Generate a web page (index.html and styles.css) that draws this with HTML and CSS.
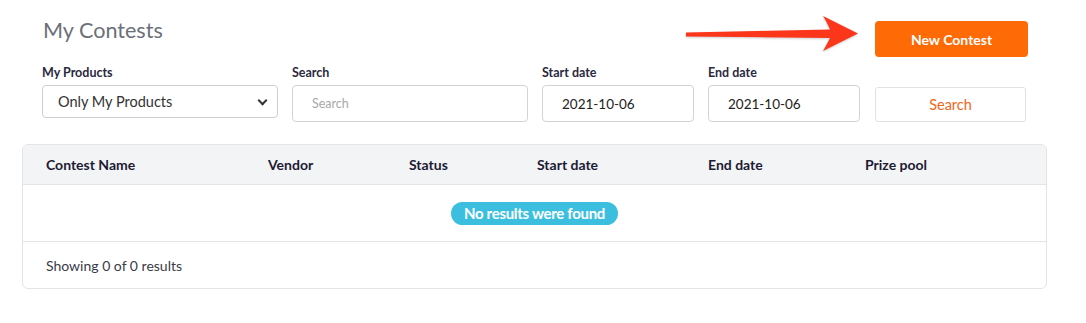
FILE: index.html
```html
<!DOCTYPE html>
<html lang="en">
<head>
  <meta charset="UTF-8">
  <meta name="viewport" content="width=device-width, initial-scale=1.0">
  <title>My Contests</title>
  <link rel="stylesheet" href="styles.css">
</head>
<body>
  <div class="page">
    <div class="top">
      <div class="title-row">
        <h1>My Contests</h1>
        <button type="button" class="btn-new">New Contest</button>
      </div>
      <form class="filters">
        <div class="field">
          <label for="products">My Products</label>
          <div class="select-wrap">
            <select id="products" class="select">
              <option>Only My Products</option>
              <option>All Products</option>
            </select>
          </div>
        </div>
        <div class="field">
          <label for="q">Search</label>
          <input id="q" type="text" class="input input-search" placeholder="Search">
        </div>
        <div class="field">
          <label for="start">Start date</label>
          <input id="start" type="text" class="input" value="2021-10-06">
        </div>
        <div class="field">
          <label for="end">End date</label>
          <input id="end" type="text" class="input" value="2021-10-06">
        </div>
        <div class="field field-btn">
          <button type="button" class="btn-search">Search</button>
        </div>
      </form>
    </div>

    <div class="card">
      <div class="row thead">
        <span>Contest Name</span>
        <span>Vendor</span>
        <span>Status</span>
        <span>Start date</span>
        <span>End date</span>
        <span>Prize pool</span>
      </div>
      <div class="tbody">
        <span class="badge">No results were found</span>
      </div>
      <div class="tfoot">Showing 0 of 0 results</div>
    </div>
  </div>

  <!-- annotation arrow pointing at the New Contest button -->
  <svg class="arrow" width="190" height="50" viewBox="0 0 190 50">
    <path d="M6 22.6 L150 19.5 Q147 12 143 6 L178 23.5 L143 41 Q147 34 150 28 L6 26.4 Z"/>
  </svg>
</body>
</html>
```

FILE: styles.css
```css
body { margin: 0; background: #fff; font-family: Lato, "Open Sans", Arial, sans-serif; color: #333; position: relative; }
.page { width: 1025px; margin-left: 22px; padding-top: 17px; }
.top { padding: 0 19px 0 20px; }

.title-row { display: flex; justify-content: space-between; align-items: flex-start; }
h1 { margin: 0 0 0 1px; font-size: 21.6px; font-weight: 400; line-height: 26px; color: #6b7079; }
.btn-new { width: 153px; height: 36px; margin-top: 4px; border: 0; border-radius: 4px; background: #fd6a06; color: #fff; font-family: inherit; font-size: 14px; font-weight: 700; cursor: pointer; }

.filters { display: grid; grid-template-columns: 236px 236px 152px 152px 1fr; column-gap: 14px; margin-top: 8px; }
.field { display: flex; flex-direction: column; }
.field label { display: block; font-size: 12.5px; font-weight: 700; line-height: 15px; color: #2a2940; margin-bottom: 5px; }
.field-btn { justify-content: flex-end; }

.select-wrap { position: relative; }
.select-wrap::after { content: ""; position: absolute; right: 12px; top: 12px; width: 5px; height: 5px; border-right: 2px solid #333; border-bottom: 2px solid #333; transform: rotate(45deg); pointer-events: none; }
.select { appearance: none; -webkit-appearance: none; width: 100%; height: 33px; padding: 0 30px 0 15px; border: 1px solid #cfcfcf; border-radius: 4px; background: #fff; font-family: inherit; font-size: 14.5px; color: #333; }

.input { box-sizing: border-box; width: 100%; height: 37px; padding: 0 10px 0 19px; border: 1px solid #d3d3d3; border-radius: 4px; background: #fff; font-family: inherit; font-size: 13.5px; color: #222; }
.input-search { font-size: 12.5px; }
.input::placeholder { color: #a8a8a8; }

.btn-search { width: 151px; height: 35px; margin-left: 1px; border: 1px solid #e2e2e2; border-radius: 3px; background: #fff; color: #f2661c; font-family: inherit; font-size: 14.5px; cursor: pointer; }

.card { margin-top: 22px; border: 1px solid #e4e4e4; border-radius: 6px; overflow: hidden; }
.row { display: grid; grid-template-columns: 222px 141px 128px 171px 157px 1fr; padding-left: 23px; }
.thead { height: 39px; align-items: center; background: #f3f4f6; border-bottom: 1px solid #e4e4e4; font-size: 14px; font-weight: 700; color: #1c1b33; }
.tbody { height: 56px; display: flex; align-items: center; justify-content: center; border-bottom: 1px solid #e4e4e4; }
.badge { display: inline-block; height: 23px; line-height: 23px; padding: 0 13px; border-radius: 12px; background: #3cbfdf; color: #fff; font-size: 15px; font-weight: 700; letter-spacing: -0.3px; }
.tfoot { height: 46px; display: flex; align-items: center; padding-left: 23px; font-size: 14px; color: #3a3a48; }

.arrow { position: absolute; left: 680px; top: 10px; fill: #fc361b; filter: drop-shadow(0 1px 1px rgba(0, 0, 0, 0.2)); }
```
